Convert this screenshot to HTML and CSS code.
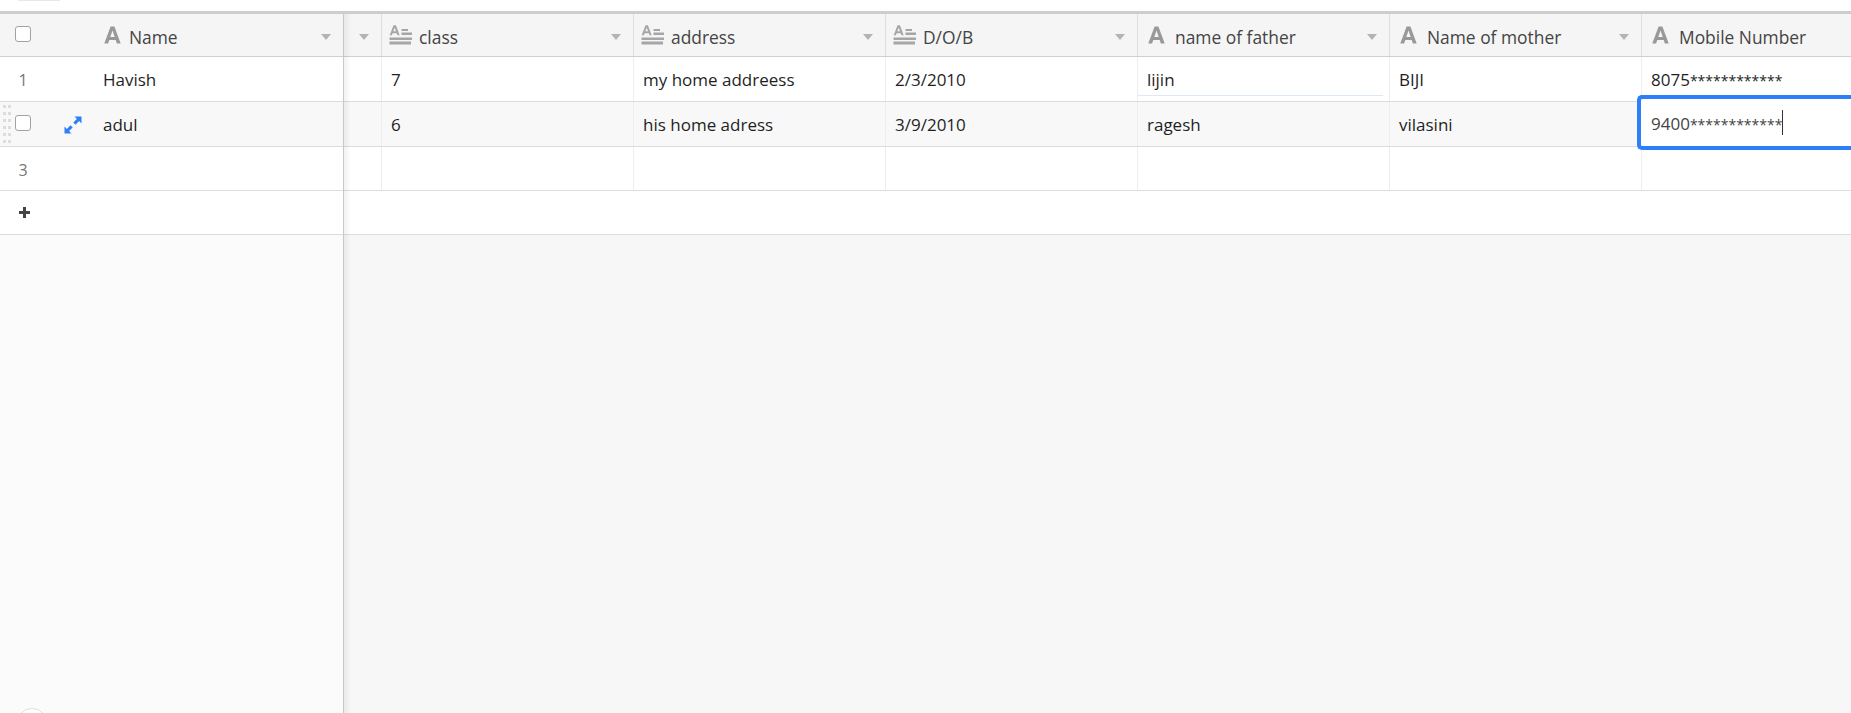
FILE: index.html
```html
<!DOCTYPE html>
<html lang="en">
<head>
    <meta charset="UTF-8">
    <title>Students grid</title>
    <link rel="stylesheet" href="styles.css">
</head>
<body>
    <svg class="sprites" width="0" height="0">
        <symbol id="icon-text" viewBox="0 0 17 18">
            <path d="M.3 17.500 6.600.5h3.800l6.300 17h-3.800l-1.200-3.500H5.300l-1.200 3.500zM6.300 11h4.400L8.500 4.500z" fill-rule="evenodd"/>
        </symbol>
        <symbol id="icon-long" viewBox="0 0 24 20">
            <path d="M.7 10.200 4.500.2h2.400l3.800 10H8.500l-.7-2H3.600l-.7 2zM4.300 6.300h2.800L5.700 2.700z" fill-rule="evenodd"/>
            <path d="M12.500 4h6.500v2h-6.500zM12.500 7.500H23V10H12.500zM.5 12.500h22.500V15H.5zM.5 16.500h21.500v3H.5z"/>
        </symbol>
    </svg>

    <div class="topbar"><div class="top-btn"></div></div>

    <div class="grid">
        <div class="left-pane">
            <div class="row head-row">
                <span class="gutter"><span class="checkbox"></span></span>
                <div class="head-cell primary">
                    <svg class="icon-a"><use href="#icon-text"/></svg>
                    <span class="head-label">Name</span>
                    <span class="arrow"></span>
                </div>
            </div>
            <div class="row">
                <span class="gutter"><span class="row-num">1</span></span>
                <div class="cell primary">Havish</div>
            </div>
            <div class="row hovered">
                <span class="gutter">
                    <span class="drag-dots"></span>
                    <span class="checkbox"></span>
                    <svg class="expand" viewBox="0 0 18 18">
                        <path d="M10.500.5h7v7l-2.400-2.400-3.600 3.600-2.200-2.200 3.600-3.600zM7.500 17.500h-7v-7l2.400 2.400 3.600-3.600 2.200 2.200-3.600 3.600z"/>
                    </svg>
                </span>
                <div class="cell primary">adul</div>
            </div>
            <div class="row short">
                <span class="gutter"><span class="row-num">3</span></span>
                <div class="cell primary"></div>
            </div>
            <div class="row add-row">
                <span class="plus"></span>
            </div>
            <div class="left-empty"><span class="round-btn"></span></div>
        </div>

        <div class="right-pane">
            <div class="row head-row">
                <div class="head-cell stub"><span class="arrow"></span></div>
                <div class="head-cell col">
                    <svg class="icon-l"><use href="#icon-long"/></svg>
                    <span class="head-label">class</span>
                    <span class="arrow"></span>
                </div>
                <div class="head-cell col">
                    <svg class="icon-l"><use href="#icon-long"/></svg>
                    <span class="head-label">address</span>
                    <span class="arrow"></span>
                </div>
                <div class="head-cell col">
                    <svg class="icon-l"><use href="#icon-long"/></svg>
                    <span class="head-label">D/O/B</span>
                    <span class="arrow"></span>
                </div>
                <div class="head-cell col">
                    <svg class="icon-a"><use href="#icon-text"/></svg>
                    <span class="head-label">name of father</span>
                    <span class="arrow"></span>
                </div>
                <div class="head-cell col">
                    <svg class="icon-a"><use href="#icon-text"/></svg>
                    <span class="head-label">Name of mother</span>
                    <span class="arrow"></span>
                </div>
                <div class="head-cell col last">
                    <svg class="icon-a"><use href="#icon-text"/></svg>
                    <span class="head-label">Mobile Number</span>
                </div>
            </div>
            <div class="row">
                <div class="cell stub"></div>
                <div class="cell col">7</div>
                <div class="cell col">my home addreess</div>
                <div class="cell col">2/3/2010</div>
                <div class="cell col underlined">lijin</div>
                <div class="cell col">BIJI</div>
                <div class="cell col last"><span>8075<span class="mask">************</span></span></div>
            </div>
            <div class="row hovered">
                <div class="cell stub"></div>
                <div class="cell col">6</div>
                <div class="cell col">his home adress</div>
                <div class="cell col">3/9/2010</div>
                <div class="cell col">ragesh</div>
                <div class="cell col">vilasini</div>
                <div class="cell col last active-cell">
                    <div class="editor"><span class="typed">9400<span class="mask">************</span></span><span class="caret"></span></div>
                </div>
            </div>
            <div class="row short">
                <div class="cell stub"></div>
                <div class="cell col"></div>
                <div class="cell col"></div>
                <div class="cell col"></div>
                <div class="cell col"></div>
                <div class="cell col"></div>
                <div class="cell col last"></div>
            </div>
            <div class="row add-row"></div>
            <div class="right-empty"></div>
        </div>
    </div>
</body>
</html>
```

FILE: styles.css
```css
* {
    box-sizing: border-box;
}
html, body {
    height: 100%;
}
body {
    margin: 0;
    overflow: hidden;
    background: white;
    color: #1f1f1f;
    font-family: "Open Sans", "Noto Sans", sans-serif;
    font-size: 17px;
    display: flex;
    flex-direction: column;
}
.sprites {
    display: block;
    height: 0;
}
.topbar {
    height: 11px;
    padding-left: 18px;
    flex-shrink: 0;
}
.top-btn {
    width: 42px;
    height: 1px;
    background: #e8e8e8;
}
.grid {
    flex: 1;
    display: flex;
    min-height: 0;
    border-top: 3px solid #cdcdcd;
}
.left-pane {
    width: 344px;
    flex-shrink: 0;
    display: flex;
    flex-direction: column;
    border-right: 1px solid #c8c8c8;
    background: #fbfbfb;
}
.right-pane {
    flex: 1;
    min-width: 0;
    display: flex;
    flex-direction: column;
    background: #f7f7f7;
    overflow: hidden;
    position: relative;
}
.right-pane::before {
    content: "";
    position: absolute;
    top: 0;
    left: 0;
    bottom: 0;
    width: 6px;
    background: linear-gradient(to right, rgba(0,0,0,0.05), rgba(0,0,0,0.01));
    z-index: 2;
}
.row {
    height: 45px;
    flex-shrink: 0;
    display: flex;
    align-items: stretch;
    background: white;
    border-bottom: 1px solid #dcdcdc;
}
.row.short {
    height: 44px;
}
.row.hovered {
    background: #f8f8f8;
}
.row.head-row {
    height: 43px;
    background: #f5f5f5;
    border-bottom: 1px solid #cfcfcf;
}
.row.add-row {
    height: 44px;
    align-items: center;
}
.left-empty,
.right-empty {
    flex: 1;
    position: relative;
}
.gutter {
    width: 103px;
    flex-shrink: 0;
    position: relative;
    display: flex;
    align-items: center;
    padding-left: 15px;
}
.row-num {
    width: 16px;
    margin-top: 2px;
    text-align: center;
    color: #777;
    font-size: 16px;
}
.checkbox {
    width: 16px;
    height: 16px;
    background: white;
    border: 1px solid #9ea3a8;
    border-radius: 3px;
}
.head-row .checkbox {
    margin-bottom: 2px;
}
.hovered .checkbox {
    margin-bottom: 3px;
}
.drag-dots {
    position: absolute;
    left: 3px;
    top: 3px;
    width: 3px;
    height: 3px;
    background: #dddddd;
    box-shadow: 5px 0 #ddd, 0 7px #ddd, 5px 7px #ddd, 0 14px #ddd, 5px 14px #ddd,
        0 21px #ddd, 5px 21px #ddd, 0 28px #ddd, 5px 28px #ddd, 0 35px #ddd, 5px 35px #ddd;
}
.expand {
    position: absolute;
    left: 64px;
    top: 14px;
    width: 18px;
    height: 18px;
    fill: #2d7ff9;
}
.plus {
    width: 11px;
    height: 11px;
    margin-left: 19px;
    background:
        linear-gradient(#444, #444) center / 11px 3px no-repeat,
        linear-gradient(#444, #444) center / 3px 11px no-repeat;
}
.round-btn {
    position: absolute;
    left: 16px;
    bottom: -27px;
    width: 32px;
    height: 32px;
    border-radius: 50%;
    background: white;
    border: 1px solid #e0e0e0;
}
.cell {
    display: flex;
    align-items: center;
    white-space: nowrap;
    padding-left: 9px;
    padding-top: 1px;
}
.cell.primary {
    flex: 1;
    padding-left: 0;
}
.stub {
    width: 38px;
    flex-shrink: 0;
    padding: 0;
    border-right: 1px solid #eeeeee;
}
.col {
    width: 252px;
    flex-shrink: 0;
    border-right: 1px solid #eeeeee;
}
.col.last {
    flex: 1;
    border-right: none;
}
.mask {
    font-size: 14px;
}
.underlined {
    position: relative;
}
.underlined::after {
    content: "";
    position: absolute;
    left: -1px;
    right: 6px;
    bottom: 5px;
    height: 1px;
    background: #dde7fb;
}
.head-cell {
    display: flex;
    align-items: center;
    padding-left: 7px;
    color: #444;
    white-space: nowrap;
}
.head-row .col,
.head-row .stub {
    border-right-color: #dedede;
}
.head-cell.primary {
    flex: 1;
    padding-left: 1px;
}
.head-cell.stub {
    padding-left: 15px;
}
.head-label {
    flex: 1;
    padding-top: 3px;
    font-size: 17.400px;
}
.head-cell.col .icon-a {
    margin-left: 3px;
    margin-right: 10px;
}
.icon-a {
    width: 17px;
    height: 18px;
    margin-right: 8px;
    fill: #999;
    flex-shrink: 0;
}
.icon-l {
    width: 24px;
    height: 20px;
    margin-right: 6px;
    fill: #a6a6a6;
    flex-shrink: 0;
}
.arrow {
    width: 0;
    height: 0;
    margin-right: 12px;
    margin-top: 3px;
    border-left: 5px solid transparent;
    border-right: 5px solid transparent;
    border-top: 6px solid #b3b3b3;
    flex-shrink: 0;
}
.active-cell {
    position: relative;
}
.editor {
    position: absolute;
    top: -7px;
    left: -5px;
    width: 240px;
    height: 55px;
    display: flex;
    align-items: center;
    padding-left: 10px;
    background: white;
    border: 4px solid #2d7ff9;
    border-right: none;
    border-radius: 5px 0 0 5px;
    color: #444;
    z-index: 3;
}
.typed {
    margin-top: 2px;
}
.caret {
    width: 1px;
    height: 25px;
    background: #333;
}
```
